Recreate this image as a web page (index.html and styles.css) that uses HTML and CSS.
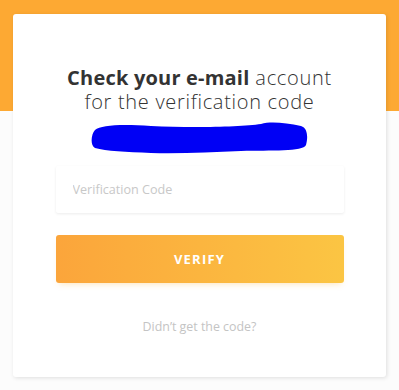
FILE: index.html
```html
<!DOCTYPE html>
<html lang="en">
<head>
    <meta charset="UTF-8">
    <meta name="viewport" content="width=device-width, initial-scale=1.0">
    <title>Verify E-mail</title>
    <link rel="stylesheet" href="styles.css">
</head>
<body>
    <div class="card">
        <h1 class="title"><b>Check your e-mail</b> account<br>for the verification code</h1>

        <!-- redacted address -->
        <svg class="scribble" width="218" height="34" viewBox="0 0 218 34">
            <path d="M4 9 C10 4 30 3 60 5 C100 7 150 6 170 3 C180 0 195 2 210 5 C217 7 217 17 215 24 C212 31 180 29 150 30 C120 31 90 33 60 32 C35 31 15 30 4 27 C-1 25 0 13 4 9 Z" fill="#0000f5"/>
        </svg>

        <input class="code-input" type="text" placeholder="Verification Code">
        <button class="btn-verify">VERIFY</button>
        <a class="resend" href="#">Didn’t get the code?</a>
    </div>
</body>
</html>
```

FILE: styles.css
```css
/* Basic styling */
html {
    background-color: #fcfcfc;
}

body {
    font-family: "Open Sans", "Noto Sans", sans-serif;
    background: linear-gradient(180deg, #fda933, #fda933) no-repeat;
    background-size: 100% 111px;
    margin: 0;
    padding: 14px 0 13px 13px;
}

.card {
    width: 373px;
    height: 363px;
    box-sizing: border-box;
    background-color: #fff;
    border-radius: 3px;
    box-shadow: 1px 1px 4px rgba(0, 0, 0, 0.12);
    display: flex;
    flex-direction: column;
    align-items: center;
    padding-top: 52px;
}

.title {
    margin: 0;
    font-size: 20px;
    line-height: 24px;
    font-weight: 300;
    letter-spacing: 0.7px;
    color: #333;
    text-align: center;
}

.title b {
    font-weight: 700;
    letter-spacing: 0.2px;
}

.scribble {
    display: block;
    margin-top: 7px;
}

.code-input {
    width: 288px;
    height: 47px;
    box-sizing: border-box;
    margin-top: 11px;
    border: none;
    border-radius: 2px;
    padding: 0 17px;
    font-family: inherit;
    font-size: 12.6px;
    box-shadow: 0 1px 3px rgba(0, 0, 0, 0.08);
    outline: none;
}

.code-input::placeholder {
    color: #c8c8c8;
}

.btn-verify {
    width: 288px;
    height: 48px;
    margin-top: 22px;
    border: none;
    border-radius: 3px;
    background: linear-gradient(90deg, #fba53b, #fbc543);
    box-shadow: 0 4px 6px -3px rgba(251, 180, 60, 0.35);
    color: #fff;
    font-family: inherit;
    font-size: 13px;
    font-weight: 700;
    letter-spacing: 1.2px;
    cursor: pointer;
}

.resend {
    margin-top: 35px;
    font-size: 12.4px;
    color: #c4c4c4;
    text-decoration: none;
}
```
